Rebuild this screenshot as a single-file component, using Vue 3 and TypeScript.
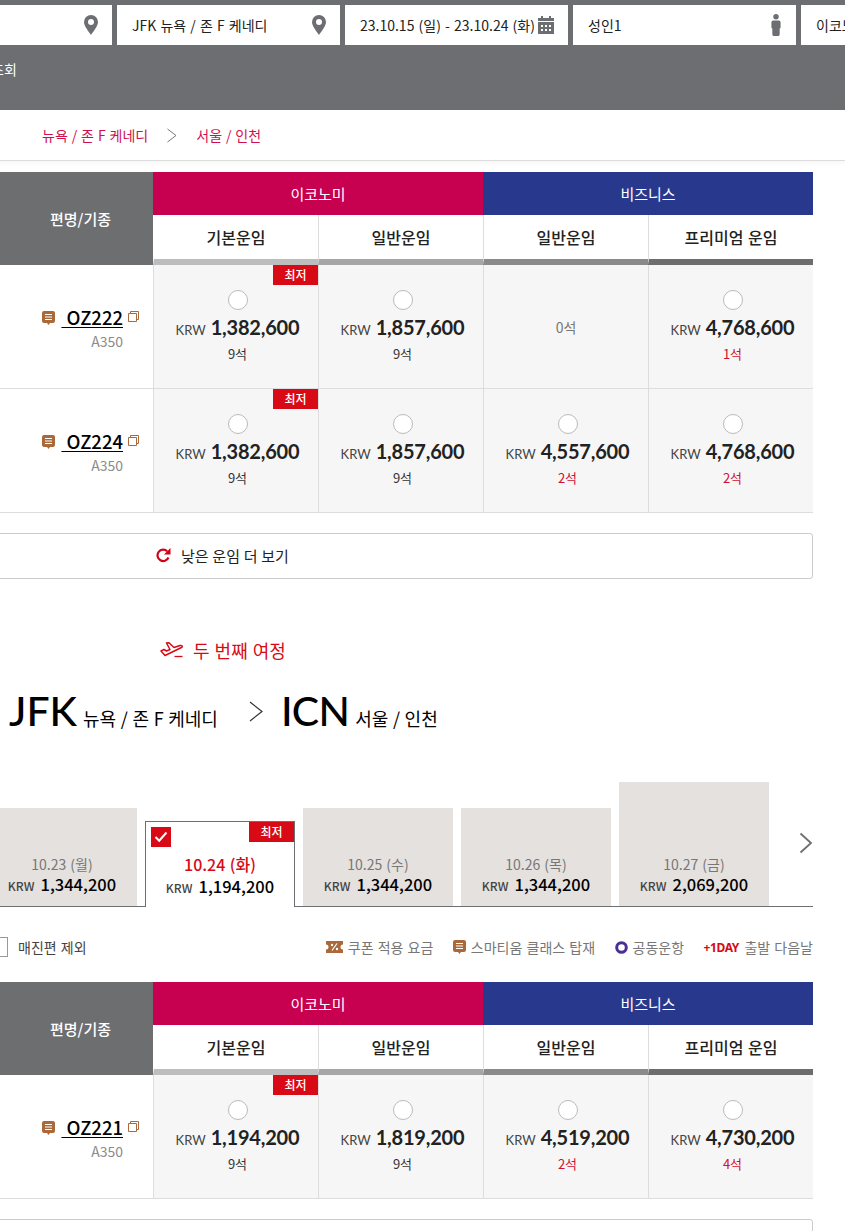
<script setup lang="ts">
interface Fare {
  price?: string
  seats: string
  low?: boolean
}
interface Flight {
  no: string
  fares: Fare[]
  lowest: boolean
}

const fares1: Flight[] = [
  {
    no: 'OZ222',
    lowest: true,
    fares: [
      { price: '1,382,600', seats: '9석' },
      { price: '1,857,600', seats: '9석' },
      { seats: '0석' },
      { price: '4,768,600', seats: '1석', low: true },
    ],
  },
  {
    no: 'OZ224',
    lowest: true,
    fares: [
      { price: '1,382,600', seats: '9석' },
      { price: '1,857,600', seats: '9석' },
      { price: '4,557,600', seats: '2석', low: true },
      { price: '4,768,600', seats: '2석', low: true },
    ],
  },
]

const fares2: Flight[] = [
  {
    no: 'OZ221',
    lowest: true,
    fares: [
      { price: '1,194,200', seats: '9석' },
      { price: '1,819,200', seats: '9석' },
      { price: '4,519,200', seats: '2석', low: true },
      { price: '4,730,200', seats: '4석', low: true },
    ],
  },
]

const tables = [fares1, fares2]
const subHeads = [
  { label: '기본운임', cls: 'b1' },
  { label: '일반운임', cls: 'b2' },
  { label: '일반운임', cls: 'b3' },
  { label: '프리미엄 운임', cls: 'b4' },
]

const days = [
  { date: '10.23 (월)', price: '1,344,200', h: 98 },
  { date: '10.24 (화)', price: '1,194,200', h: 86, on: true },
  { date: '10.25 (수)', price: '1,344,200', h: 98 },
  { date: '10.26 (목)', price: '1,344,200', h: 98 },
  { date: '10.27 (금)', price: '2,069,200', h: 124 },
]
</script>

<template>
  <div class="viewport">
    <div class="content">
      <header class="search">
        <div class="fields">
          <div class="field">
            <span></span>
            <svg width="14" height="20" viewBox="0 0 14 20"><path fill="#6d6e71" fill-rule="evenodd" d="M7 0a7 7 0 0 1 7 7c0 4-4 8.500-7 13C4 15.500 0 11 0 7a7 7 0 0 1 7-7zm0 4a3 3 0 1 0 0 6 3 3 0 0 0 0-6z"/></svg>
          </div>
          <div class="field">
            <span>JFK 뉴욕 / 존 F 케네디</span>
            <svg width="14" height="20" viewBox="0 0 14 20"><path fill="#6d6e71" fill-rule="evenodd" d="M7 0a7 7 0 0 1 7 7c0 4-4 8.500-7 13C4 15.500 0 11 0 7a7 7 0 0 1 7-7zm0 4a3 3 0 1 0 0 6 3 3 0 0 0 0-6z"/></svg>
          </div>
          <div class="field">
            <span>23.10.15 (일) - 23.10.24 (화)</span>
            <svg width="16" height="18" viewBox="0 0 16 18"><path fill="#6d6e71" fill-rule="evenodd" d="M3 0h2v2h6V0h2v2h3v3H0V2h3zM0 6h16v12H0zm3 3v2h2V9zm4 0v2h2V9zm4 0v2h2V9zm-8 4v2h2v-2zm4 0v2h2v-2zm4 0v2h2v-2z"/></svg>
          </div>
          <div class="field">
            <span>성인1</span>
            <svg class="person" width="10" height="22" viewBox="0 0 10 24"><circle cx="5" cy="3" r="3" fill="#6d6e71"/><path fill="#6d6e71" d="M2 7h6a2 2 0 0 1 2 2v6l-1 1v6a2 2 0 0 1-2 2H3a2 2 0 0 1-2-2v-6l-1-1V9a2 2 0 0 1 2-2z"/></svg>
          </div>
          <div class="field"><span>이코노미</span></div>
        </div>
        <div class="inquiry">조회</div>
      </header>

      <nav class="crumb">
        <span>뉴욕 / 존 F 케네디</span>
        <svg width="10" height="15" viewBox="0 0 10 15"><path d="M.5 1L9 7.500.5 14" fill="none" stroke="#777" stroke-width="1"/></svg>
        <span>서울 / 인천</span>
      </nav>

      <template v-for="(rows, ti) in tables" :key="ti">
        <section v-if="ti === 1" class="journey">
          <h2 class="journey-title">
            <svg width="23" height="16" viewBox="0 0 23 16"><path d="M1 9l3-1.500L6.500 9 10 7.500 6.500 1 9 .8l5 4.700 6-2c2-.5 3 1 1.500 2L5 13.500z" fill="none" stroke="#d80a16" stroke-width="1.500" stroke-linejoin="round"/><path d="M14.500 14.500h8" stroke="#d80a16" stroke-width="1.300"/></svg>
            <span>두 번째 여정</span>
          </h2>
          <div class="route">
            <strong>JFK</strong>
            <span class="city">뉴욕 / 존 F 케네디</span>
            <svg class="route-arrow" width="14" height="21" viewBox="0 0 14 21"><path d="M1 1l12 9.500L1 20" fill="none" stroke="#333" stroke-width="1.200"/></svg>
            <strong class="to">ICN</strong>
            <span class="city">서울 / 인천</span>
          </div>
          <div class="days">
            <div v-for="d in days" :key="d.date" class="day" :class="{ on: d.on }" :style="{ height: d.h + 'px' }">
              <span v-if="d.on" class="check">
                <svg width="14" height="12" viewBox="0 0 14 12"><path d="M1.500 6l3.700 3.700L12.500 1.500" fill="none" stroke="#fff" stroke-width="2"/></svg>
              </span>
              <span v-if="d.on" class="badge">최저</span>
              <div class="day-date">{{ d.date }}</div>
              <div class="day-price"><small>KRW</small>{{ d.price }}</div>
            </div>
            <svg class="day-next" width="14" height="22" viewBox="0 0 14 22"><path d="M1.500 1.500L12 11 1.500 20.500" fill="none" stroke="#6d6e71" stroke-width="1.800"/></svg>
          </div>
          <div class="legend-row">
            <label class="soldout"><i></i>매진편 제외</label>
            <ul class="legend">
              <li>
                <svg width="17" height="12" viewBox="0 0 17 12"><path fill="#a9693a" d="M0 0h17v3.500a2.500 2.500 0 0 0 0 5V12H0V8.500a2.500 2.500 0 0 0 0-5z"/><path d="M6 9.500l5-7" stroke="#fff" stroke-width="1.200"/><circle cx="6" cy="4" r="1.200" fill="#fff"/><circle cx="11" cy="8" r="1.200" fill="#fff"/></svg>
                쿠폰 적용 요금
              </li>
              <li>
                <svg width="13" height="14" viewBox="0 0 13 14"><path fill="#a9693a" d="M2 0h9a2 2 0 0 1 2 2v8a2 2 0 0 1-2 2H8l-1.500 2L5 12H2a2 2 0 0 1-2-2V2a2 2 0 0 1 2-2z"/><path d="M3 3.500h7M3 6h7M3 8.500h7" stroke="#fff" stroke-width="1.100"/></svg>
                스마티움 클래스 탑재
              </li>
              <li>
                <svg width="13" height="13" viewBox="0 0 13 13"><circle cx="6.500" cy="6.500" r="4.800" fill="none" stroke="#4b2f96" stroke-width="3"/></svg>
                공동운항
              </li>
              <li><b>+1DAY</b> 출발 다음날</li>
            </ul>
          </div>
        </section>

        <div class="fare-table" :class="{ first: ti === 0 }">
          <div class="head-flight">편명/기종</div>
          <div class="head-class eco">이코노미</div>
          <div class="head-class biz">비즈니스</div>
          <div v-for="s in subHeads" :key="s.cls" class="head-sub" :class="s.cls">{{ s.label }}</div>

          <template v-for="row in rows" :key="row.no">
            <div class="flight">
              <div class="flight-no">
                <svg class="smart" width="13" height="14" viewBox="0 0 13 14"><path fill="#a9693a" d="M2 0h9a2 2 0 0 1 2 2v8a2 2 0 0 1-2 2H8l-1.500 2L5 12H2a2 2 0 0 1-2-2V2a2 2 0 0 1 2-2z"/><path d="M3 3.500h7M3 6h7M3 8.500h7" stroke="#fff" stroke-width="1.100"/></svg>
                <a>&nbsp;{{ row.no }}</a>
                <svg class="copy" width="11" height="11" viewBox="0 0 11 11"><path d="M.5 2.500h8v8h-8zM2.500 2.500v-2h8v8h-2" fill="none" stroke="#a9693a" stroke-width="1"/></svg>
              </div>
              <div class="aircraft">A350</div>
            </div>
            <div v-for="(f, i) in row.fares" :key="i" class="fare">
              <span v-if="i === 0 && row.lowest" class="badge">최저</span>
              <template v-if="f.price">
                <span class="radio"></span>
                <div class="price"><small>KRW</small>{{ f.price }}</div>
                <div class="seats" :class="{ low: f.low }">{{ f.seats }}</div>
              </template>
              <div v-else class="seats none">{{ f.seats }}</div>
            </div>
          </template>
        </div>

        <button class="more">
          <svg width="15" height="15" viewBox="0 0 15 15"><path d="M12.500 9.500A5.700 5.700 0 1 1 11.200 3.200" fill="none" stroke="#d0021b" stroke-width="2.200"/><path d="M14.500 0v6.500H8z" fill="#d0021b"/></svg>
          <span>낮은 운임 더 보기</span>
        </button>
      </template>
    </div>
  </div>
</template>

<style>
html,
body {
  margin: 0;
  background: #fff;
  overflow: hidden;
}
</style>

<style scoped>
.viewport {
  width: 845px;
  height: 1231px;
  overflow: hidden;
  font-family: 'Noto Sans CJK KR', 'Noto Sans', sans-serif;
  word-spacing: 1px;
  color: #222;
}
.content {
  width: 1032px;
  margin-left: -187px;
}

.search {
  height: 110px;
  box-sizing: border-box;
  padding-top: 5px;
  background: #6d6e71;
}
.fields {
  display: flex;
  gap: 5px;
  margin-left: 76px;
}
.field {
  flex: 0 0 223px;
  height: 40px;
  box-sizing: border-box;
  padding: 0 14px 0 15px;
  display: flex;
  align-items: center;
  justify-content: space-between;
  background: #fff;
  font-size: 14px;
  white-space: nowrap;
}
.person {
  margin-right: 1px;
}
.inquiry {
  margin: 14px 0 0 173px;
  padding-left: 5px;
  color: #fff;
  font-size: 14px;
  line-height: 20px;
}

.crumb {
  width: 1032px;
  height: 51px;
  box-sizing: border-box;
  padding-left: 229px;
  display: flex;
  align-items: center;
  gap: 19px;
  border-bottom: 1px solid #ddd;
  box-shadow: 0 3px 4px rgba(0, 0, 0, 0.03);
  color: #d0104c;
  font-size: 14px;
  word-spacing: 0.8px;
}

.fare-table {
  width: 1000px;
  display: grid;
  grid-template-columns: 340px repeat(4, 165px);
  grid-template-rows: 43px 50px;
  grid-auto-rows: 124px;
}
.fare-table.first {
  margin-top: 11px;
}
.head-flight {
  grid-row: 1 / span 2;
  display: flex;
  align-items: center;
  justify-content: flex-end;
  padding-right: 42px;
  padding-bottom: 1px;
  background: #6d6e70;
  color: #fff;
  font-size: 15px;
  font-weight: 500;
}
.head-class {
  grid-column: span 2;
  display: flex;
  align-items: center;
  justify-content: center;
  padding-bottom: 1px;
  color: #fff;
  font-size: 15px;
}
.eco {
  background: #c70050;
}
.biz {
  background: #28388c;
}
.head-sub {
  display: flex;
  align-items: center;
  justify-content: center;
  box-sizing: border-box;
  border-left: 1px solid #ddd;
  border-bottom: 6px solid;
  padding-bottom: 1px;
  font-size: 16px;
  font-weight: 500;
  background: #fff;
}
.head-sub.b1 {
  border-left-color: transparent;
  border-bottom-color: #bdbdbd;
}
.b2 {
  border-bottom-color: #a6a6a6;
}
.b3 {
  border-bottom-color: #8a8a8a;
}
.b4 {
  border-bottom-color: #6d6d6d;
}

.flight {
  display: flex;
  flex-direction: column;
  align-items: flex-end;
  padding: 40px 30px 0 0;
  box-sizing: border-box;
  border-bottom: 1px solid #ddd;
}
.flight-no {
  display: flex;
  align-items: flex-start;
  height: 24px;
  color: #000;
  font-size: 18.500px;
  font-weight: 500;
  line-height: 24px;
}
.flight-no a {
  text-decoration: underline;
  text-underline-offset: 2px;
}
.smart {
  margin: 6px 6px 0 0;
}
.copy {
  margin: 6px -16px 0 5px;
}
.aircraft {
  margin-top: 2px;
  color: #8b8b8b;
  font-size: 14px;
  line-height: 20px;
}

.fare {
  position: relative;
  display: flex;
  flex-direction: column;
  align-items: center;
  box-sizing: border-box;
  padding: 25px 0 0 3px;
  background: #f6f6f6;
  border-left: 1px solid #ddd;
  border-bottom: 1px solid #ddd;
}
.radio {
  width: 18px;
  height: 18px;
  border: 1px solid #bbb;
  border-radius: 50%;
  background: #fff;
}
.price {
  margin-top: 3px;
  font-family: Lato, 'Noto Sans', sans-serif;
  font-size: 20px;
  font-weight: 700;
  line-height: 28px;
  letter-spacing: -0.2px;
  color: #222;
}
.price small {
  margin-right: 5px;
  font-size: 13px;
  font-weight: 400;
  color: #444;
  letter-spacing: 0;
}
.seats {
  margin-top: 1px;
  font-size: 13px;
  line-height: 18px;
  color: #333;
}
.seats.low {
  color: #d01030;
}
.seats.none {
  margin: 28px 0 0 -3px;
  color: #777;
  font-size: 14px;
}
.badge {
  position: absolute;
  top: 0;
  right: 0;
  width: 45px;
  height: 20px;
  background: #d80a16;
  color: #fff;
  font-size: 12px;
  font-weight: 500;
  line-height: 20px;
  text-align: center;
}

.more {
  display: flex;
  align-items: center;
  gap: 10px;
  width: 1000px;
  height: 46px;
  margin-top: 20px;
  padding: 0 0 2px 342px;
  border: 1px solid #ccc;
  border-radius: 3px;
  background: #fff;
  color: #222;
  font-family: inherit;
  word-spacing: 0.4px;
  font-size: 15px;
}

.journey {
  width: 1000px;
  padding-top: 59px;
}
.journey-title {
  display: flex;
  align-items: center;
  gap: 10px;
  height: 24px;
  margin: 0 0 0 347px;
  color: #d80a16;
  font-size: 18px;
  font-weight: 400;
}
.route {
  display: flex;
  align-items: baseline;
  height: 50px;
  margin: 24px 0 0 196px;
  color: #000;
}
.route strong {
  font-family: Lato, sans-serif;
  font-size: 41px;
  font-weight: 500;
  line-height: 50px;
}
.route strong.to {
  letter-spacing: -0.7px;
}
.city {
  margin-left: 6px;
  font-size: 18px;
  word-spacing: 0.6px;
}
.route-arrow {
  margin: 0 18px 0 31px;
  align-self: center;
}
.days {
  position: relative;
  display: flex;
  align-items: flex-end;
  gap: 8px;
  height: 124px;
  margin-top: 46px;
  padding-left: 174px;
  border-bottom: 1px solid #6d6e71;
}
.day {
  position: relative;
  flex: 0 0 150px;
  box-sizing: border-box;
  display: flex;
  flex-direction: column;
  justify-content: flex-end;
  align-items: center;
  padding-bottom: 9px;
  background: #e4e1de;
}
.day.on {
  margin-bottom: -1px;
  padding-bottom: 8px;
  background: #fff;
  border: 1px solid #6d6e71;
  border-bottom: none;
}
.day-date {
  font-size: 14px;
  line-height: 18px;
  color: #777;
}
.on .day-date {
  color: #d80a16;
  font-size: 16px;
  font-weight: 500;
  line-height: 22px;
}
.day-price {
  font-size: 16.500px;
  font-weight: 500;
  line-height: 22px;
  color: #000;
}
.day-price small {
  margin-right: 6px;
  font-size: 12px;
  color: #444;
}
.check {
  position: absolute;
  left: 5px;
  top: 5px;
  width: 20px;
  height: 20px;
  display: flex;
  align-items: center;
  justify-content: center;
  background: #d80a16;
}
.day-next {
  position: absolute;
  right: 0;
  top: 50px;
}
.legend-row {
  display: flex;
  align-items: center;
  justify-content: space-between;
  height: 20px;
  margin: 30px 0 25px;
}
.soldout {
  display: flex;
  align-items: center;
  margin-left: 175px;
  color: #444;
  font-size: 14px;
}
.soldout i {
  width: 18px;
  height: 18px;
  margin-right: 10px;
  border: 1px solid #999;
}
.legend {
  display: flex;
  gap: 19.500px;
  margin: 0;
  padding: 0;
  list-style: none;
  color: #777;
  font-size: 14px;
}
.legend li {
  display: flex;
  align-items: center;
  gap: 5px;
  white-space: nowrap;
}
.legend b {
  margin-right: 0.5px;
  color: #d80a16;
  font-size: 12px;
  letter-spacing: -0.4px;
  font-family: 'Noto Sans', sans-serif;
}
</style>
